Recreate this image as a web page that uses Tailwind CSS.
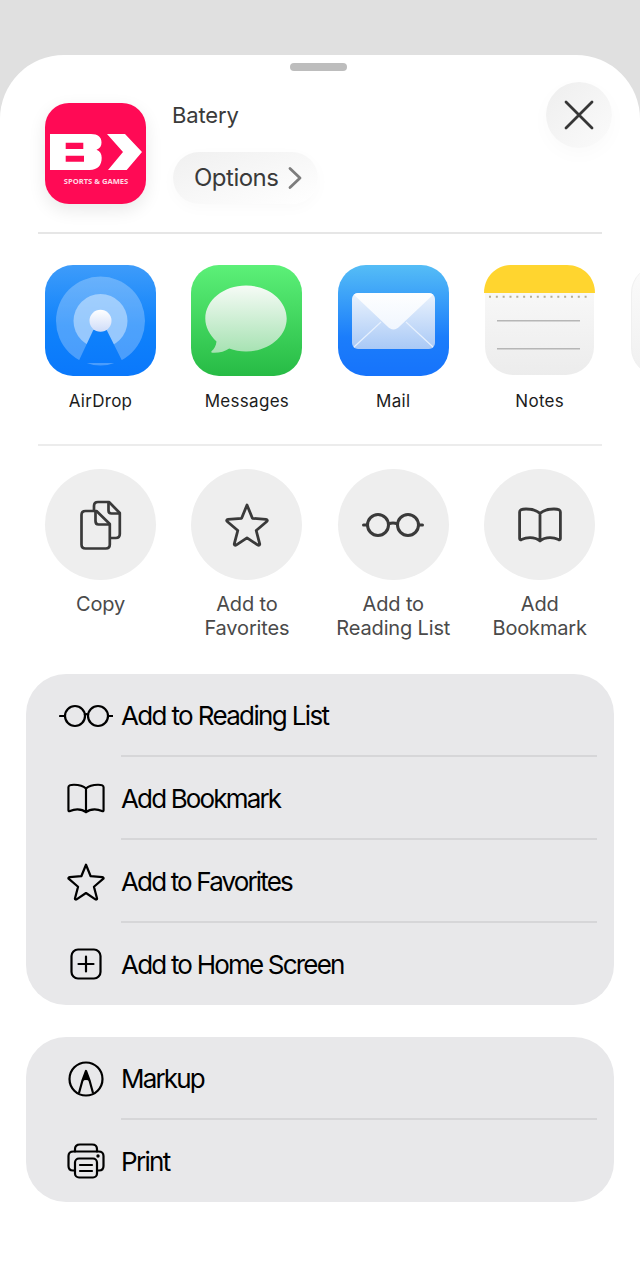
<!doctype html>
<html lang="en">
<head>
<meta charset="utf-8">
<script src="https://cdn.jsdelivr.net/npm/@tailwindcss/browser@4"></script>
</head>
<body class="w-[640px] h-[1280px] overflow-hidden bg-[#e0e0e0] [font-family:Inter,sans-serif]">
<svg width="0" height="0" class="absolute">
  <defs>
    <symbol id="glasses" viewBox="0 0 62 24"><g fill="none" stroke="currentColor" stroke-linecap="round"><circle cx="16" cy="12" r="10.500"/><circle cx="46" cy="12" r="10.500"/><path d="M26.500 11c2.500-1.200 6.500-1.200 9 0M5.500 12H1.500M56.500 12h4"/></g></symbol>
    <symbol id="book" viewBox="0 0 44 36"><path d="M22 6.500C19 3.500 14 2 8 2 6 2 4 2.300 3 2.800 2 3.300 1.600 4 1.600 5V31.500C1.600 32.800 2.600 33 3.500 32.600 6 31.400 9 30.700 12 30.700 16 30.700 19.500 31.800 22 34 24.500 31.800 28 30.700 32 30.700 35 30.700 38 31.400 40.500 32.600 41.400 33 42.400 32.800 42.400 31.500V5C42.400 4 42 3.300 41 2.800 40 2.300 38 2 36 2 30 2 25 3.500 22 6.500ZM22 6.500V34" fill="none" stroke="currentColor" stroke-linejoin="round"/></symbol>
    <symbol id="star" viewBox="0 0 44 44"><path d="M22 3.500 27.400 16.800 41 17.800c1.300.1 1.800 1.400.8 2.200L31.200 29l3.500 13.300c.3 1.200-.8 1.900-1.800 1.300L22 36.300 11.100 43.600c-1 .6-2.100-.1-1.800-1.300L12.800 29 2.200 20c-1-.8-.5-2.100.8-2.200l13.600-1L22 3.500Z" transform="translate(0 -1.500)" fill="none" stroke="currentColor" stroke-linejoin="round"/></symbol>
  </defs>
</svg>

<main class="mt-[55px] h-[1225px] rounded-t-[64px] bg-white overflow-hidden">
  <div class="pt-2">
    <div class="ml-[290px] h-2 w-[57px] rounded-full bg-[#bdbdbd]"></div>
  </div>

  <!-- Header -->
  <header class="flex items-start pl-[45px] pr-[28px] pt-[32px] h-[133px]">
    <div class="size-[101px] rounded-[24px] bg-[#ff0a55] shadow-[0_6px_18px_rgba(0,0,0,0.09)] shrink-0">
      <svg viewBox="0 0 101 101" class="size-[101px]">
        <path fill="#fff" fill-rule="evenodd" d="M5 31H46c7 0 10.500 3 10.500 8.500 0 3.500-1.500 6-5 7.300 3.500 1.200 5.200 4 5.200 8 0 7.500-4 12.200-12 12.200H5ZM20.700 39.700V46H38.300V39.700ZM20.700 52.700V58.700H39V52.700Z"/>
        <path fill="#fff" d="M62 31H80L97 49 81.700 67H63L78 49Z"/>
        <text x="51" y="80.800" text-anchor="middle" font-family="Open Sans" font-weight="700" font-size="7.600" fill="#ffd9e4">SPORTS &amp; GAMES</text>
      </svg>
    </div>
    <div class="ml-[26px] flex-1">
      <p class="-mt-px text-[22px] leading-[26px] text-[#3a3a3a] tracking-[-0.15px]">Batery</p>
      <div class="ml-px mt-[24px] flex items-center h-[52px] w-[145px] rounded-full pl-[21px] bg-linear-to-br from-[#f0f0f0] to-[#ffffff] shadow-[0_4px_16px_rgba(0,0,0,0.025)]">
        <span class="text-[24px] leading-[30px] text-[#3a3a3a] tracking-[-0.5px]">Options</span>
        <svg viewBox="0 0 14 24" class="ml-[10px] w-[14px] h-[24px]"><path d="M2 2.500 12 12 2 21.500" fill="none" stroke="#7d7d7d" stroke-width="2.800" stroke-linecap="round" stroke-linejoin="round"/></svg>
      </div>
    </div>
    <button class="-mt-[21px] flex items-center justify-center size-[66px] rounded-full bg-linear-to-br from-[#eeeeee] to-[#fbfbfb] shadow-[0_6px_20px_rgba(0,0,0,0.025)] shrink-0" aria-label="Close">
      <svg viewBox="0 0 30 30" class="size-[30px]"><path d="M2 2 28 28M28 2 2 28" fill="none" stroke="#363636" stroke-width="2.800" stroke-linecap="round"/></svg>
    </button>
  </header>

  <div class="mx-[38px] mt-[28px] h-[2px] bg-[#e6e6e6]"></div>

  <!-- Apps -->
  <section class="mt-[31px] flex gap-[35.4px] pl-[45px] w-[800px]">
    <div class="w-[111px] shrink-0 flex flex-col items-center">
      <svg viewBox="0 0 111 111" class="size-[111px]">
        <defs>
          <linearGradient id="adBg" x1="0" y1="0" x2="0" y2="1"><stop offset="0" stop-color="#3e9cfa"/><stop offset="0.55" stop-color="#0f82fb"/><stop offset="1" stop-color="#0a78fb"/></linearGradient>
          <linearGradient id="adDot" x1="0" y1="0" x2="0" y2="1"><stop offset="0" stop-color="#ffffff"/><stop offset="1" stop-color="#cfdcf8"/></linearGradient>
          <mask id="adMask"><rect width="111" height="111" fill="#fff"/><path d="M48.300 65 32.800 98H78.200L61.700 65Z" fill="#000"/></mask>
        </defs>
        <rect width="111" height="111" rx="28" fill="url(#adBg)"/>
        <g mask="url(#adMask)">
          <circle cx="55.500" cy="56" r="44.500" fill="#fff" fill-opacity="0.26"/>
          <circle cx="55.500" cy="56" r="27" fill="#fff" fill-opacity="0.42"/>
        </g>
        <circle cx="55.500" cy="55.700" r="11" fill="url(#adDot)"/>
      </svg>
      <span class="mt-[15px] text-[17px] leading-5 text-[#1c1c1c] tracking-[0.3px]">AirDrop</span>
    </div>
    <div class="w-[111px] shrink-0 flex flex-col items-center">
      <svg viewBox="0 0 111 111" class="size-[111px]">
        <defs>
          <linearGradient id="msBg" x1="0" y1="0" x2="0" y2="1"><stop offset="0" stop-color="#5cf078"/><stop offset="1" stop-color="#27bb45"/></linearGradient>
          <linearGradient id="msB" x1="0" y1="0" x2="0" y2="1"><stop offset="0" stop-color="#f6fbf6"/><stop offset="1" stop-color="#a6e2b2"/></linearGradient>
        </defs>
        <rect width="111" height="111" rx="28" fill="url(#msBg)"/>
        <path fill="url(#msB)" d="M55 20.500c22.500 0 40.700 14.800 40.700 33s-18.200 33-40.700 33c-6 0-11.700-1-16.800-3-4.200 3-10 4.500-16.800 4.200-1.200-.1-1.500-.9-.7-1.600 2.700-2.500 4.300-5.500 4.800-9.700C18.600 70 14.300 62 14.300 53.500c0-18.200 18.200-33 40.700-33Z"/>
      </svg>
      <span class="mt-[15px] text-[17px] leading-5 text-[#1c1c1c] tracking-[0.3px]">Messages</span>
    </div>
    <div class="w-[111px] shrink-0 flex flex-col items-center">
      <svg viewBox="0 0 111 111" class="size-[111px]">
        <defs>
          <linearGradient id="mlBg" x1="0" y1="0" x2="0" y2="1"><stop offset="0" stop-color="#55bdf6"/><stop offset="0.65" stop-color="#1b7dfb"/><stop offset="1" stop-color="#1673fb"/></linearGradient>
          <linearGradient id="mlE" x1="0" y1="0" x2="0" y2="1"><stop offset="0" stop-color="#ebf3fd"/><stop offset="1" stop-color="#a9c9f6"/></linearGradient>
          <linearGradient id="mlF" x1="0" y1="0" x2="0" y2="1"><stop offset="0" stop-color="#ffffff"/><stop offset="1" stop-color="#f0f6fe"/></linearGradient>
          <clipPath id="mlC"><rect x="14" y="28" width="83" height="56" rx="6"/></clipPath>
        </defs>
        <rect width="111" height="111" rx="28" fill="url(#mlBg)"/>
        <g clip-path="url(#mlC)">
          <rect x="14" y="28" width="83" height="56" fill="url(#mlE)"/>
          <path d="M16 82 43 57M95 82 68 57" stroke="#e6f0fd" stroke-width="1.200" fill="none"/>
          <path d="M12 26H99L62 61C58 65.500 53 65.500 49 61Z" fill="url(#mlF)"/>
        </g>
      </svg>
      <span class="mt-[15px] text-[17px] leading-5 text-[#1c1c1c] tracking-[0.3px]">Mail</span>
    </div>
    <div class="w-[111px] shrink-0 flex flex-col items-center">
      <svg viewBox="0 0 111 111" class="size-[111px]">
        <defs>
          <linearGradient id="ntBg" x1="0" y1="0" x2="0" y2="1"><stop offset="0" stop-color="#fbfbfb"/><stop offset="1" stop-color="#ececec"/></linearGradient>
        </defs>
        <rect x="1" width="109" height="110" rx="28" fill="url(#ntBg)"/>
        <path d="M0 28C0 12 12 0 28 0H83C99 0 111 12 111 28Z" fill="#ffd52f"/>
        <path d="M5 31.700H107" stroke="#b4ad95" stroke-width="2" stroke-dasharray="2 4.830" fill="none"/>
        <path d="M13 55.700H96M13 83.700H96" stroke="#b6b6b6" stroke-width="1.600" fill="none"/>
      </svg>
      <span class="mt-[15px] text-[17px] leading-5 text-[#1c1c1c] tracking-[0.3px]">Notes</span>
    </div>
    <div class="w-[111px] shrink-0">
      <div class="size-[111px] rounded-[28px] bg-linear-to-b from-[#fbfbfb] to-[#f0f0f0] border border-[#f0f0f0]"></div>
    </div>
  </section>

  <div class="mx-[38px] mt-[33px] h-[2px] bg-[#ececec]"></div>

  <!-- Actions -->
  <section class="mt-[23px] flex gap-[35.4px] pl-[45px]">
    <div class="w-[111px] flex flex-col items-center">
      <div class="size-[111px] rounded-full bg-[#eeeeee] flex items-center justify-center text-[#3a3a3a]">
        <svg viewBox="0 0 42 50" class="w-[42px] h-[50px]"><g fill="none" stroke="currentColor" stroke-width="2.700" stroke-linejoin="round"><path d="M14 10V6C14 3.500 15.500 2 18 2H29L39.800 13V34C39.800 36.500 38.300 38 35.800 38H31"/><path d="M28.500 2V10.500C28.500 12.500 29.500 13.500 31.500 13.500H39.800"/><path d="M5.500 11H16.500L29.800 24V44.500C29.800 47 28.300 48.500 25.800 48.500H5.500C3 48.500 1.500 47 1.500 44.500V15C1.500 12.500 3 11 5.500 11Z"/><path d="M15.500 11V21C15.500 23 16.500 24.500 18.500 24.500H29.800"/></g></svg>
      </div>
      <span class="mt-[12px] text-center text-[20px] leading-6 text-[#4a4a4a] tracking-[-0.15px]">Copy</span>
    </div>
    <div class="w-[111px] flex flex-col items-center">
      <div class="size-[111px] rounded-full bg-[#eeeeee] flex items-center justify-center text-[#3a3a3a]">
        <svg class="size-[44px]" stroke-width="2.800"><use href="#star"/></svg>
      </div>
      <span class="mt-[12px] text-center text-[20px] leading-6 text-[#4a4a4a] whitespace-nowrap tracking-[-0.15px]">Add to<br>Favorites</span>
    </div>
    <div class="w-[111px] flex flex-col items-center">
      <div class="size-[111px] rounded-full bg-[#eeeeee] flex items-center justify-center text-[#3a3a3a]">
        <svg class="w-[62px] h-[24px]" stroke-width="3"><use href="#glasses"/></svg>
      </div>
      <span class="mt-[12px] text-center text-[20px] leading-6 text-[#4a4a4a] whitespace-nowrap tracking-[-0.15px]">Add to<br>Reading List</span>
    </div>
    <div class="w-[111px] flex flex-col items-center">
      <div class="size-[111px] rounded-full bg-[#eeeeee] flex items-center justify-center text-[#3a3a3a]">
        <svg class="w-[44px] h-[36px]" stroke-width="2.800"><use href="#book"/></svg>
      </div>
      <span class="mt-[12px] text-center text-[20px] leading-6 text-[#4a4a4a] whitespace-nowrap tracking-[-0.15px]">Add<br>Bookmark</span>
    </div>
  </section>

  <!-- List 1 -->
  <section class="mx-[26px] mt-[34px] h-[331px] rounded-[40px] bg-[#e8e8ea]">
    <div class="flex h-[83px] items-center">
      <div class="ml-[30px] mr-[5px] w-[60px] flex justify-center text-black">
        <svg viewBox="0 0 54 24" class="w-[54px] h-[24px]"><g fill="none" stroke="currentColor" stroke-width="2.200" stroke-linecap="round"><circle cx="16" cy="12" r="10"/><circle cx="39" cy="12" r="10"/><path d="M26 10.500c.9-.5 2.100-.5 3 0M6 12H1M49 12h4.500"/></g></svg>
      </div>
      <div class="flex-1 mr-[17px] h-full pt-[2px] flex items-center border-b-2 border-[#d6d6d8] text-[26px] text-black tracking-[-1.65px]">Add to Reading List</div>
    </div>
    <div class="flex h-[83px] items-center">
      <div class="ml-[30px] mr-[5px] w-[60px] flex justify-center text-black"><svg class="w-[38px] h-[31px]" viewBox="0 0 44 36" stroke-width="2.500"><use href="#book"/></svg></div>
      <div class="flex-1 mr-[17px] h-full pt-[2px] flex items-center border-b-2 border-[#d6d6d8] text-[26px] text-black tracking-[-1.85px]">Add Bookmark</div>
    </div>
    <div class="flex h-[83px] items-center">
      <div class="ml-[30px] mr-[5px] w-[60px] flex justify-center text-black"><svg class="size-[38px]" viewBox="0 0 44 44" stroke-width="2.600"><use href="#star"/></svg></div>
      <div class="flex-1 mr-[17px] h-full pt-[2px] flex items-center border-b-2 border-[#d6d6d8] text-[26px] text-black tracking-[-1.85px]">Add to Favorites</div>
    </div>
    <div class="flex h-[82px] items-center">
      <div class="ml-[30px] mr-[5px] w-[60px] flex justify-center text-black">
        <svg viewBox="0 0 32 32" class="size-[32px]"><rect x="1.500" y="1.500" width="29" height="29" rx="6.500" fill="none" stroke="currentColor" stroke-width="2.200"/><path d="M16 8.500V23.500M8.500 16H23.500" fill="none" stroke="currentColor" stroke-width="2.200" stroke-linecap="round"/></svg>
      </div>
      <div class="flex-1 mr-[17px] h-full flex items-center text-[26px] text-black tracking-[-1.8px]">Add to Home Screen</div>
    </div>
  </section>

  <!-- List 2 -->
  <section class="mx-[26px] mt-[32px] h-[165px] rounded-[40px] bg-[#e8e8ea]">
    <div class="flex h-[83px] items-center">
      <div class="ml-[30px] mr-[5px] w-[60px] flex justify-center text-black">
        <svg viewBox="0 0 36 36" class="size-[36px]"><g fill="none" stroke="currentColor" stroke-width="2.200" stroke-linejoin="round"><circle cx="18" cy="18" r="16.500"/><path d="M11 32 14.300 20 18 10 21.700 20 25 32"/></g><path d="M14.300 20 18 10 21.700 20C19.500 18.500 16.500 18.500 14.300 20Z" fill="currentColor"/></svg>
      </div>
      <div class="flex-1 mr-[17px] h-full pt-[2px] flex items-center border-b-2 border-[#d6d6d8] text-[26px] text-black tracking-[-1.85px]">Markup</div>
    </div>
    <div class="flex h-[82px] items-center">
      <div class="ml-[30px] mr-[5px] w-[60px] flex justify-center text-black">
        <svg viewBox="0 0 38 36" class="w-[38px] h-[36px]"><g fill="none" stroke="currentColor" stroke-width="2.200" stroke-linejoin="round" stroke-linecap="round"><path d="M8 8.500V6C8 3 10 1.500 13 1.500H25C28 1.500 30 3 30 6V8.500"/><path d="M8 27.500H6C3 27.500 1.500 25.500 1.500 23V13C1.500 10 3.500 8.500 6.500 8.500H31.500C34.500 8.500 36.500 10 36.500 13V23C36.500 25.500 35 27.500 32 27.500H30"/><rect x="8" y="15.500" width="22" height="19" rx="4"/><path d="M13 22H25M13 28H25"/></g><circle cx="31" cy="13" r="1.700" fill="currentColor"/></svg>
      </div>
      <div class="flex-1 mr-[17px] h-full flex items-center text-[26px] text-black tracking-[-1.7px]">Print</div>
    </div>
  </section>
</main>
</body>
</html>
